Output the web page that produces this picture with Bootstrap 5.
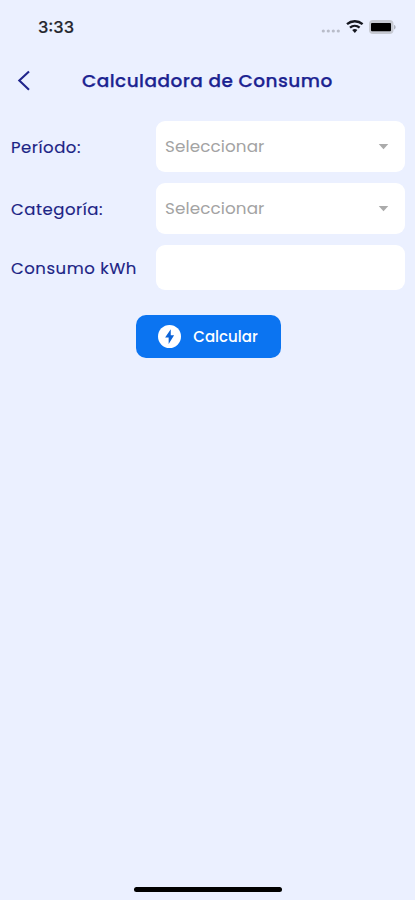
<!DOCTYPE html>
<html lang="es">
<head>
<meta charset="utf-8">
<meta name="viewport" content="width=device-width, initial-scale=1">
<title>Calculadora de Consumo</title>
<link href="https://cdn.jsdelivr.net/npm/bootstrap@5.3.0/dist/css/bootstrap.min.css" rel="stylesheet">
<style>
  body { background: #ebf0ff; font-family: Poppins, Inter, sans-serif; color: #1c2485; }
  .screen { width: 415px; height: 900px; }
  .status-bar { height: 54px; padding: 0 18px 0 38px; color: #24252c; }
  .clock { font-family: Inter, sans-serif; font-size: 16.5px; font-weight: 500; letter-spacing: 0; padding-top: 1px; -webkit-text-stroke: .2px #24252c; }
  .title-bar { height: 54px; padding-left: 17px; }
  .title-bar h1 { font-size: 18.5px; font-weight: 500; margin-left: 51px; letter-spacing: .45px; color: #1b2391; -webkit-text-stroke: .25px #1b2391; }
  .calc-form { padding: 13px 10px 0 11px; gap: 11px; }
  .field-label { width: 145px; flex: none; font-size: 16.5px; font-weight: 400; letter-spacing: .52px; white-space: nowrap; padding-top: 3px; -webkit-text-stroke: .15px #1c2485; }
  .field-box { height: 51px; min-width: 0; border: 0; border-radius: 9px; background: #fff; padding: 0 16px 0 9px; font-size: 16.8px; letter-spacing: .1px; color: #a3a3a3; }
  .field-box.short { height: 45px; }
  .btn-calc { width: 145px; height: 43px; margin-top: 14px; border-radius: 10px; background: #0b74f1; border: 0; font-size: 15px; font-weight: 500; gap: 12px; padding: 0; }
  .btn-calc span { padding-top: 1px; }
  .home-bar { width: 148px; height: 5px; border-radius: 3px; background: #000; margin-bottom: 8px; }
</style>
</head>
<body>
<main class="screen d-flex flex-column overflow-hidden">
  <div class="status-bar d-flex align-items-center justify-content-between">
    <span class="clock">3:33</span>
    <svg width="76" height="18" viewBox="0 0 76 18" aria-hidden="true">
      <g fill="#b8bcc9"><circle cx="2.3" cy="13" r="1.6"/><circle cx="7.3" cy="13" r="1.6"/><circle cx="12.3" cy="13" r="1.6"/><circle cx="17.3" cy="13" r="1.6"/></g>
      <g fill="none" stroke="#15171f" stroke-width="2.4"><path d="M26 6.1a12.3 12.3 0 0 1 15.6 0"/><path d="M29 9.6a7.5 7.5 0 0 1 9.6 0"/></g>
      <path d="M31.2 12.1a4.3 4.3 0 0 1 5.2 0L33.8 15z" fill="#15171f"/>
      <rect x="48" y="2" width="24.5" height="14" rx="4" fill="#c6c9d2"/>
      <rect x="50" y="5" width="20" height="8.2" rx="1" fill="#000"/>
      <path d="M73.2 7v4.4c1.8-.5 1.8-3.9 0-4.4z" fill="#a2a5b0"/>
    </svg>
  </div>
  <header class="title-bar d-flex align-items-center">
    <svg width="14" height="22" viewBox="0 0 14 22" fill="none" stroke="#20258c" stroke-width="2.1" aria-hidden="true"><path d="M12 1.4 2.3 10.6l9.7 9.2"/></svg>
    <h1 class="mb-0 text-nowrap">Calculadora de Consumo</h1>
  </header>
  <form class="calc-form d-flex flex-column">
    <div class="d-flex align-items-center">
      <span class="field-label"><span id="lp">Período:</span></span>
      <div class="field-box flex-grow-1 d-flex align-items-center justify-content-between" role="combobox" aria-labelledby="lp">
        <span>Seleccionar</span>
        <svg width="11" height="7" viewBox="0 0 12 7" aria-hidden="true"><path d="M.8.8h10.4L6 6.4z" fill="#ababab"/></svg>
      </div>
    </div>
    <div class="d-flex align-items-center">
      <span class="field-label"><span id="lc">Categoría:</span></span>
      <div class="field-box flex-grow-1 d-flex align-items-center justify-content-between" role="combobox" aria-labelledby="lc">
        <span>Seleccionar</span>
        <svg width="11" height="7" viewBox="0 0 12 7" aria-hidden="true"><path d="M.8.8h10.4L6 6.4z" fill="#ababab"/></svg>
      </div>
    </div>
    <div class="d-flex align-items-center">
      <label class="field-label" for="kwh">Consumo kWh</label>
      <input class="field-box short form-control flex-fill w-auto" id="kwh" type="text">
    </div>
    <button type="button" class="btn btn-primary btn-calc d-flex align-items-center justify-content-center align-self-center">
      <svg width="23" height="23" viewBox="0 0 22 22" aria-hidden="true"><circle cx="11" cy="11" r="11" fill="#fff"/><path d="M12.2 4 6.8 12h3.4v6.2L15.4 9.8h-3.2z" fill="#0b63d8"/></svg>
      <span>Calcular</span>
    </button>
  </form>
  <div class="home-bar mt-auto mx-auto"></div>
</main>
<script src="https://cdn.jsdelivr.net/npm/bootstrap@5.3.0/dist/js/bootstrap.bundle.min.js"></script>
</body>
</html>
